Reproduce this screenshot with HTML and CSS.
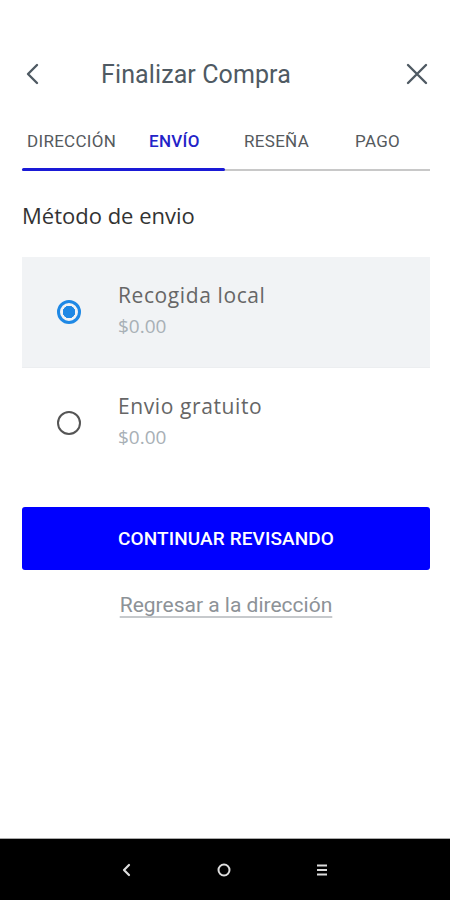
FILE: index.html
```html
<!DOCTYPE html>
<html lang="es">
<head>
  <meta charset="UTF-8">
  <meta name="viewport" content="width=device-width, initial-scale=1.0">
  <title>Finalizar Compra</title>
  <link rel="stylesheet" href="styles.css">
</head>
<body>
  <div class="screen">
    <div class="page">
      <header class="topbar">
        <button class="icon-btn" aria-label="Atrás">
          <svg width="22" height="22" viewBox="0 0 22 22"><path d="M15 2 L6 11 L15 20" fill="none" stroke="#4f5a63" stroke-width="2.4" stroke-linecap="round" stroke-linejoin="round"/></svg>
        </button>
        <h1 class="title">Finalizar Compra</h1>
        <button class="icon-btn" aria-label="Cerrar">
          <svg width="22" height="22" viewBox="0 0 22 22"><path d="M2 2 L20 20 M20 2 L2 20" fill="none" stroke="#4f5a63" stroke-width="2.4" stroke-linecap="round"/></svg>
        </button>
      </header>

      <nav class="tabs">
        <span class="tab">DIRECCIÓN</span>
        <span class="tab active">ENVÍO</span>
        <span class="tab">RESEÑA</span>
        <span class="tab">PAGO</span>
      </nav>
      <div class="progress"><div class="progress-fill"></div></div>

      <h2 class="section-title">Método de envio</h2>

      <ul class="options">
        <li class="option selected">
          <span class="radio"></span>
          <div class="option-text">
            <span class="option-name">Recogida local</span>
            <span class="option-price">$0.00</span>
          </div>
        </li>
        <li class="option">
          <span class="radio"></span>
          <div class="option-text">
            <span class="option-name">Envio gratuito</span>
            <span class="option-price">$0.00</span>
          </div>
        </li>
      </ul>

      <button class="primary">CONTINUAR REVISANDO</button>
      <a class="back-link" href="#">Regresar a la dirección</a>
    </div>

    <footer class="navbar">
      <svg width="14" height="16" viewBox="0 0 14 16"><path d="M9 3 L4 8 L9 13" fill="none" stroke="#ddd" stroke-width="2.2" stroke-linecap="round" stroke-linejoin="round"/></svg>
      <svg width="16" height="16" viewBox="0 0 16 16"><circle cx="8" cy="8" r="5.5" fill="none" stroke="#ddd" stroke-width="2"/></svg>
      <svg width="16" height="16" viewBox="0 0 16 16"><path d="M3 3.5 H13 M3 8 H13 M3 12.5 H13" stroke="#ddd" stroke-width="2.2"/></svg>
    </footer>
  </div>
</body>
</html>
```

FILE: styles.css
```css
body {
  margin: 0;
  background: #fff;
  font-family: Roboto, "Liberation Sans", sans-serif;
}
.screen {
  height: 900px;
  display: flex;
  flex-direction: column;
}
.page {
  flex: 1;
  padding: 0 20px 0 22px;
  display: flex;
  flex-direction: column;
}
.topbar {
  height: 56px;
  margin-top: 46px;
  display: flex;
  align-items: center;
  justify-content: space-between;
}
.icon-btn {
  background: none;
  border: none;
  padding: 0;
  width: 22px;
  height: 22px;
  display: flex;
}
.icon-btn:last-child {
  margin-right: 2px;
}
.title {
  margin: 0 0 0 -58px;
  font-size: 25px;
  font-weight: 400;
  color: #4f5a63;
  letter-spacing: 0.1px;
}
.tabs {
  display: flex;
  margin-top: 24px;
  height: 30px;
  align-items: center;
}
.tab {
  font-size: 17px;
  color: #55595d;
  letter-spacing: 0.3px;
}
.tab:nth-child(1) { width: 127px; padding-left: 5px; box-sizing: border-box; }
.tab:nth-child(2) { width: 95px; }
.tab:nth-child(3) { width: 111px; }
.tab.active {
  color: #2323c8;
  font-weight: 500;
}
.progress {
  margin-top: 13px;
  height: 2px;
  background: #c8c8c8;
}
.progress-fill {
  width: 203px;
  height: 3px;
  margin-top: -1px;
  background: #1a1ad6;
  border-radius: 2px;
}
.section-title {
  margin: 29px 0 0;
  font-family: "Open Sans", Lato, sans-serif;
  font-size: 22px;
  font-weight: 400;
  color: #333;
}
.options {
  list-style: none;
  padding: 0;
  margin: 27px 0 0;
}
.option {
  height: 110px;
  display: flex;
  align-items: center;
  border-bottom: 1px solid #eceef0;
}
.option:last-child {
  border-bottom: none;
}
.option.selected {
  background: #f1f3f5;
}
.radio {
  width: 24px;
  height: 24px;
  border: 2.5px solid #555;
  border-radius: 50%;
  margin-left: 35px;
  margin-right: 37px;
  box-sizing: border-box;
  flex: none;
}
.option.selected .radio {
  border: 3px solid #1e88e5;
  background: radial-gradient(circle, #1e88e5 0 6px, transparent 6.5px);
}
.option-text {
  display: flex;
  flex-direction: column;
  margin-top: -4px;
  font-family: "Open Sans", Lato, sans-serif;
}
.option-name {
  font-size: 21px;
  color: #666;
  letter-spacing: 0.6px;
}
.option-price {
  margin-top: 4px;
  font-size: 19px;
  color: #a8b0b6;
}
.primary {
  margin-top: 29px;
  height: 63px;
  border: none;
  border-radius: 3px;
  background: #0000ff;
  color: #fff;
  font-family: Roboto, sans-serif;
  font-size: 19px;
  font-weight: 500;
  letter-spacing: 0.1px;
  cursor: pointer;
}
.back-link {
  margin-top: 23px;
  align-self: center;
  color: #8d9297;
  font-size: 21px;
  text-decoration: underline;
  text-decoration-color: #c6c9cc;
  text-underline-offset: 4px;
}
.navbar {
  height: 61px;
  background: #000;
  border-top: 1px solid #aaa;
  display: flex;
  align-items: center;
  justify-content: center;
  gap: 82px;
}
```
